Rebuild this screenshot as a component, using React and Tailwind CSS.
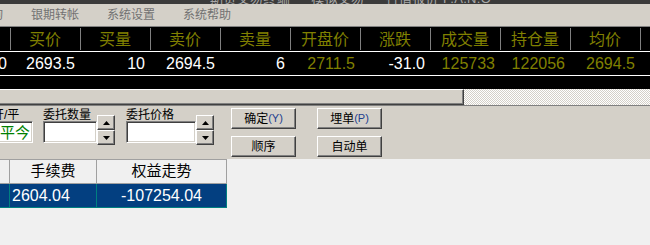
import React from 'react';

const headers = ['买价', '买量', '卖价', '卖量', '开盘价', '涨跌', '成交量', '持仓量', '均价'];
const values = [
  { v: '2693.5', c: 'text-white' },
  { v: '10', c: 'text-white' },
  { v: '2694.5', c: 'text-white' },
  { v: '6', c: 'text-white' },
  { v: '2711.5', c: 'text-[#808000]' },
  { v: '-31.0', c: 'text-white' },
  { v: '125733', c: 'text-[#808000]' },
  { v: '122056', c: 'text-[#808000]' },
  { v: '2694.5', c: 'text-[#808000]' },
];

// classic raised button
function Btn({ children }) {
  return (
    <div className="w-[65px] h-[21px] bg-[#d4d0c8] border border-t-white border-l-white border-r-[#404040] border-b-[#404040] shadow-[inset_-1px_-1px_0_#808080] flex items-center justify-center text-[12px] text-black leading-none">
      {children}
    </div>
  );
}

function Hot({ k }) {
  return <span className="text-[11px] text-[#1d3f8f]">({k})</span>;
}

function Spin() {
  const cls = 'w-[18px] h-[15px] bg-[#d4d0c8] border border-t-white border-l-white border-r-[#404040] border-b-[#404040] shadow-[inset_-1px_-1px_0_#808080] flex items-center justify-center';
  return (
    <div className="flex flex-col">
      <div className={cls}>
        <svg width="7" height="4" viewBox="0 0 7 4"><path d="M3.5 0L7 4H0z" fill="#000" /></svg>
      </div>
      <div className={cls}>
        <svg width="7" height="4" viewBox="0 0 7 4"><path d="M0 0h7L3.5 4z" fill="#000" /></svg>
      </div>
    </div>
  );
}

const sunken = 'bg-white border border-t-[#808080] border-l-[#808080] border-b-white border-r-white shadow-[inset_1px_1px_0_#404040,inset_-1px_-1px_0_#d4d0c8]';

export default function App() {
  return (
    <div className="w-[650px] h-[245px] overflow-hidden bg-[#f0f0f0] font-['Liberation_Sans','Noto_Sans_CJK_SC',sans-serif]">
      {/* title strip, mostly cut off */}
      <div className="h-[4px] overflow-hidden bg-[#3b3b3b]">
        <div className="-mt-[11px] pl-[210px] text-[13px] text-[#a8a8a8] whitespace-nowrap tracking-wide">
          期货交易终端 — 模拟交易 — 行情报价 P.A.N.O
        </div>
      </div>

      {/* menu bar */}
      <div className="h-[23px] bg-[#d4d0c8] border-b border-[#808080] flex items-center text-[12px] text-[#727272] whitespace-nowrap">
        <span className="-ml-[35px] px-[14px]">查询</span>
        <span className="px-[14px]">银期转帐</span>
        <span className="px-[14px]">系统设置</span>
        <span className="px-[14px]">系统帮助</span>
      </div>

      {/* quote board */}
      <div className="h-[62px] bg-black">
        <div className="h-[24px] flex text-[16px] text-[#808000]">
          <div className="w-[10px]" />
          {headers.map((h) => (
            <div key={h} className="w-[70px] flex items-center justify-center relative">
              <span className="absolute left-0 top-[1px] bottom-[1px] w-px bg-[#808080]" />
              <span className="pt-[2px]">{h}</span>
            </div>
          ))}
          <div className="flex-1 relative">
            <span className="absolute left-0 top-[1px] bottom-[1px] w-px bg-[#808080]" />
          </div>
        </div>
        <div className="h-px bg-white" />
        <div className="h-[23px] flex text-[16px] items-center">
          <div className="w-[10px] text-white -ml-[2px]">0</div>
          {values.map((d, i) => (
            <div key={i} className={`w-[70px] text-right pr-[3px] ${d.c}`}>{d.v}</div>
          ))}
        </div>
        <div className="h-px bg-white" />
      </div>

      {/* horizontal scrollbar */}
      <div className="h-[17px] flex border-b border-[#808080]">
        <div className="w-[464px] bg-[#d4d0c8] border-t border-t-white border-r border-r-[#404040] border-b border-b-[#404040] shadow-[inset_-1px_-1px_0_#808080]" />
        <div className="flex-1 bg-[repeating-conic-gradient(#d4d0c8_0_25%,#ffffff_0_50%)] bg-[length:2px_2px]" />
      </div>

      {/* order panel */}
      <div className="h-[53px] bg-[#d4d0c8] flex pt-[1px] text-[12px] text-black leading-none">
        <div className="-ml-[8px] w-[41px] flex flex-col">
          <div className="h-[14px] flex items-end">开/平</div>
          <div className={`h-[22px] ${sunken} flex items-center justify-end pr-[2px] text-[15px] text-[#008000]`}>平今</div>
        </div>

        <div className="ml-[10px] flex">
          <div className="flex flex-col">
            <div className="h-[14px] flex items-end">委托数量</div>
            <div className={`w-[54px] h-[22px] ${sunken}`} />
          </div>
          <div className="mt-[8px]"><Spin /></div>
        </div>

        <div className="ml-[11px] flex">
          <div className="flex flex-col">
            <div className="h-[14px] flex items-end">委托价格</div>
            <div className={`w-[70px] h-[22px] ${sunken}`} />
          </div>
          <div className="mt-[8px]"><Spin /></div>
        </div>

        <div className="ml-[17px] pt-[1px] flex flex-col gap-[7px]">
          <Btn>确定<Hot k="Y" /></Btn>
          <Btn>顺序</Btn>
        </div>

        <div className="ml-[21px] pt-[1px] flex flex-col gap-[7px]">
          <Btn>埋单<Hot k="P" /></Btn>
          <Btn>自动单</Btn>
        </div>
      </div>

      {/* account table */}
      <div className="w-[227px]">
        <div className="h-[25px] flex border-t border-b border-[#a0a0a0] text-[15px] text-black">
          <div className="w-[10px] border-r border-[#a0a0a0]" />
          <div className="w-[87px] border-r border-[#a0a0a0] flex items-center justify-center">手续费</div>
          <div className="w-[130px] border-r border-[#a0a0a0] flex items-center justify-center">权益走势</div>
        </div>
        <div className="h-[24px] flex bg-[#033f80] border-b border-[#008080] text-[16px] text-white">
          <div className="w-[10px] border-r border-[#008080]" />
          <div className="w-[87px] border-r border-[#008080] flex items-center pl-[2px]">2604.04</div>
          <div className="w-[130px] border-r border-[#008080] flex items-center justify-center">-107254.04</div>
        </div>
      </div>
    </div>
  );
}
